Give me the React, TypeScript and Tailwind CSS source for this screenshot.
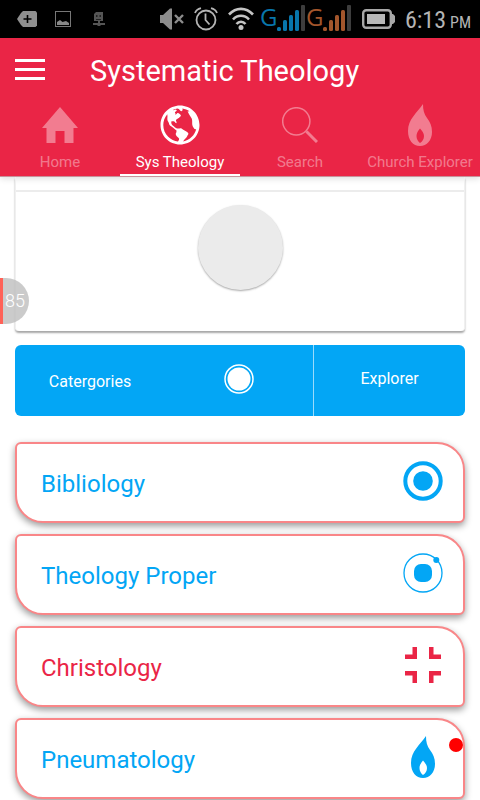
import type { ReactNode } from 'react'
import { IoMdGlobe } from 'react-icons/io'

type Tab = { label: string; icon: ReactNode; active?: boolean }
type Topic = { label: string; icon: ReactNode; color: string }

const HomeIcon = () => (
  <svg viewBox="0 0 36 36" className="w-9 h-9" fill="currentColor">
    <path d="M18 0 36 21H31.500V36H22.500V24H13.500V36H4.500V21H0Z" />
  </svg>
)

const SearchIcon = () => (
  <svg viewBox="0 0 36 36" className="w-9 h-9" fill="none" stroke="currentColor">
    <circle cx="14.300" cy="14.300" r="13.600" strokeWidth="1.500" />
    <path d="M24.500 24.500 35 35" strokeWidth="3" />
  </svg>
)

const FlameIcon = () => (
  <svg viewBox="0 0 24 42" className="w-6 h-[42px]" fill="currentColor" fillRule="evenodd">
    <path d="M15 0C15 6 16 10 19 14C22 18 24 22 24 28C24 36 19 42 12 42C5 42 0 36 0 27C0 15 9 9 15 0ZM12 24.500C10 27 8.500 29 8.500 32C8.500 35 10 37.500 12 39C14.500 37.500 16 35 16 32C16 29 14 27 12 24.500Z" />
  </svg>
)

const TargetIcon = () => (
  <svg viewBox="0 0 40 40" className="w-10 h-10" fill="none" stroke="currentColor">
    <circle cx="20" cy="20" r="17.700" strokeWidth="4" />
    <circle cx="20" cy="20" r="9.800" fill="currentColor" stroke="none" />
  </svg>
)

const OrbitIcon = () => (
  <svg viewBox="0 0 40 40" className="w-10 h-10" fill="none" stroke="currentColor">
    <circle cx="20" cy="20" r="19" strokeWidth="1.300" />
    <rect x="11" y="11" width="18" height="18" rx="7" fill="currentColor" stroke="none" />
    <circle cx="33.300" cy="7" r="3" fill="currentColor" stroke="none" />
  </svg>
)

const ContractIcon = () => (
  <svg viewBox="0 0 36 36" className="w-9 h-9" fill="currentColor">
    <path d="M7.500 0H12V12H0V7.500H7.500ZM24 0H28.500V7.500H36V12H24ZM0 24H12V36H7.500V28.500H0ZM24 24H36V28.500H28.500V36H24Z" />
  </svg>
)

const tabs: Tab[] = [
  { label: 'Home', icon: <HomeIcon /> },
  { label: 'Sys Theology', icon: <IoMdGlobe size={48} />, active: true },
  { label: 'Search', icon: <SearchIcon /> },
  { label: 'Church Explorer', icon: <FlameIcon /> },
]

const topics: Topic[] = [
  { label: 'Bibliology', icon: <TargetIcon />, color: 'text-[#03a6f5]' },
  { label: 'Theology Proper', icon: <OrbitIcon />, color: 'text-[#03a6f5]' },
  { label: 'Christology', icon: <ContractIcon />, color: 'text-[#ea2546]' },
  { label: 'Pneumatology', icon: <FlameIcon />, color: 'text-[#03a6f5]' },
]

const SignalIcon = ({ color }: { color: string }) => (
  <div className={`flex items-center ${color}`}>
    <span className="w-[17px] pb-1 text-2xl leading-6 font-['Open_Sans',sans-serif]">G</span>
    <svg viewBox="0 0 29 28" className="w-[29px] h-7" fill="currentColor">
      <rect x="0" y="22" width="4" height="4" rx="1.500" />
      <rect x="6" y="15" width="4" height="11" rx="1.500" />
      <rect x="12" y="10" width="4" height="16" rx="1.500" />
      <rect x="18" y="5" width="4" height="21" rx="1.500" />
      <rect x="24" y="0" width="4" height="26" rx="1" fill="#3d3d3d" />
    </svg>
  </div>
)

const StatusBar = () => (
  <div className="flex items-center justify-between h-[38px] bg-black pl-[17px] pr-[9px] text-[#b4b4b4]">
    <div className="flex items-center gap-[18px]">
      <svg viewBox="0 0 20 16" className="w-5 h-4">
        <path d="M6 0H18.500L20 1.500V14.500L18.500 16H6L4 14L0 8L4 2Z" fill="#8f8f8f" />
        <path d="M10.500 4V12M6.500 8H14.500" stroke="#000" strokeWidth="1.600" />
      </svg>
      <svg viewBox="0 0 16 16" className="w-4 h-4" fill="none" stroke="#777">
        <rect x="0.500" y="0.500" width="15" height="15" />
        <path d="M2 14V11L5 9L7.500 11L11 10L14 12V14Z" fill="#888" stroke="none" />
      </svg>
      <svg viewBox="0 0 12 14" className="w-5 h-3.5" fill="#555">
        <path d="M1 2 3 0H10V9H1ZM5 9H7V11H12V13H7.500V14H4.500V13H0V11H5Z" />
        <path d="M3 3H4.500V5H3ZM6.500 3H8V5H6.500ZM3 7H8V8H3Z" fill="#222" />
      </svg>
    </div>
    <div className="flex items-center gap-2.5">
      <svg viewBox="0 0 24 22" className="w-6 h-[22px]" fill="#8c8c8c">
        <path d="M0 7H3L10 0.500H12V21.500H10L3 15H0Z" />
        <path d="M15 7 23 15M23 7 15 15" stroke="#8c8c8c" strokeWidth="2.400" />
      </svg>
      <svg viewBox="0 0 24 24" className="w-6 h-6" fill="none" stroke="#b4b4b4" strokeWidth="1.800">
        <circle cx="12" cy="13" r="9.500" />
        <path d="M11.500 6.500V13L15.500 17.500M1 6C2 3.500 4 2 7 1.200M23 6C22 3.500 20 2 17 1.200" />
      </svg>
      <svg viewBox="0 0 26 24" className="w-[26px] h-6" fill="none" stroke="#c4c4c4" strokeWidth="2.600">
        <path d="M1 7.500C8 0 18 0 25 7.500M5 12.500C9.500 7.500 16.500 7.500 21 12.500M8.500 17C11 14 15 14 17.500 17" />
        <circle cx="13" cy="20.500" r="2.500" fill="#c4c4c4" stroke="none" />
      </svg>
      <div className="flex -ml-1">
        <SignalIcon color="text-[#0876ab]" />
        <SignalIcon color="text-[#a3562c]" />
      </div>
      <svg viewBox="0 0 33 20" className="w-[33px] h-5">
        <rect x="1.200" y="1.200" width="27.600" height="17.600" rx="3" fill="none" stroke="#a8a8a8" strokeWidth="2.400" />
        <rect x="5" y="5" width="18" height="10" fill="#b8b8b8" />
        <path d="M29 5H31L33 7V13L31 15H29Z" fill="#a8a8a8" />
      </svg>
      <div className="flex items-baseline gap-1 pt-1 leading-6 whitespace-nowrap font-['Roboto_Condensed',Roboto,sans-serif]">
        <span className="text-2xl leading-6">6:13</span>
        <span className="text-base leading-6">PM</span>
      </div>
    </div>
  </div>
)

const Header = () => (
  <header className="bg-[#ea2546] text-white border-b border-[#c8929b] shadow-[0_2px_6px_rgba(0,0,0,0.12)]">
    <div className="flex items-center h-[62px] px-[15px] gap-[45px]">
      <button aria-label="Menu" className="flex flex-col gap-1.5">
        <span className="w-[30px] h-[3px] bg-white" />
        <span className="w-[30px] h-[3px] bg-white" />
        <span className="w-[30px] h-[3px] bg-white" />
      </button>
      <h1 className="text-[29px] leading-8 pt-1">Systematic Theology</h1>
    </div>
    <nav className="grid grid-cols-4">
      {tabs.map((tab) => (
        <a
          key={tab.label}
          href="#"
          className={`flex flex-col items-center h-[76px] border-b-2 whitespace-nowrap ${
            tab.active ? 'border-white' : 'border-transparent text-white/40'
          }`}
        >
          <span className="flex items-center justify-center h-[51px]">{tab.icon}</span>
          <span className="text-[15px] leading-6">{tab.label}</span>
        </a>
      ))}
    </nav>
  </header>
)

export default function App() {
  return (
    <div className="relative min-h-screen overflow-hidden bg-white font-[Roboto,sans-serif]">
      <StatusBar />
      <Header />
      <main className="px-[15px]">
        <section className="rounded-b border-x border-[#f0f0f0] shadow-[0_2px_2px_rgba(0,0,0,0.35)]">
          <div className="h-[15px] border-b-2 border-[#ececec]" />
          <div className="flex justify-center h-[139px] pt-[13px]">
            <div className="size-[85px] rounded-full bg-[#ebebeb] shadow-[0_1px_2px_rgba(0,0,0,0.35)]" />
          </div>
        </section>

        <div className="mt-3.5 grid grid-cols-[150fr_148fr_152fr] h-[71px] overflow-hidden rounded-md bg-[#03a6f5] text-white">
          <button className="pt-0.5">Catergories</button>
          <button aria-label="Toggle" className="flex items-center justify-center pb-1">
            <svg viewBox="0 0 30 30" className="w-[30px] h-[30px]">
              <circle cx="15" cy="15" r="14" fill="none" stroke="#fff" strokeWidth="1.500" />
              <circle cx="15" cy="15" r="11.500" fill="#fff" />
            </svg>
          </button>
          <button className="border-l border-white/60 pb-1">Explorer</button>
        </div>

        <div className="mt-[26px] flex flex-col gap-[11px]">
          {topics.map((topic) => (
            <button
              key={topic.label}
              className={`flex items-center justify-between h-[81px] pl-6 pr-5 pb-1 bg-white border-2 border-[#f98688] rounded-tl-md rounded-tr-[28px] rounded-br-md rounded-bl-[28px] shadow-[0_3px_7px_rgba(0,0,0,0.4)] ${topic.color}`}
            >
              <span className="text-2xl pt-1.5">{topic.label}</span>
              <span className="flex w-10 justify-center">{topic.icon}</span>
            </button>
          ))}
        </div>
      </main>

      {/* floating counter bubble */}
      <div className="absolute left-0 top-[278px] flex items-center w-[29px] h-[46px] pl-0.5 rounded-r-full border-l-3 border-[#ff6258] bg-[#bebebe]/80 text-white text-lg font-light">
        85
      </div>
      {/* notification dot */}
      <div className="absolute right-[17px] top-[738px] size-3.5 rounded-full bg-[#f00]" />
    </div>
  )
}
